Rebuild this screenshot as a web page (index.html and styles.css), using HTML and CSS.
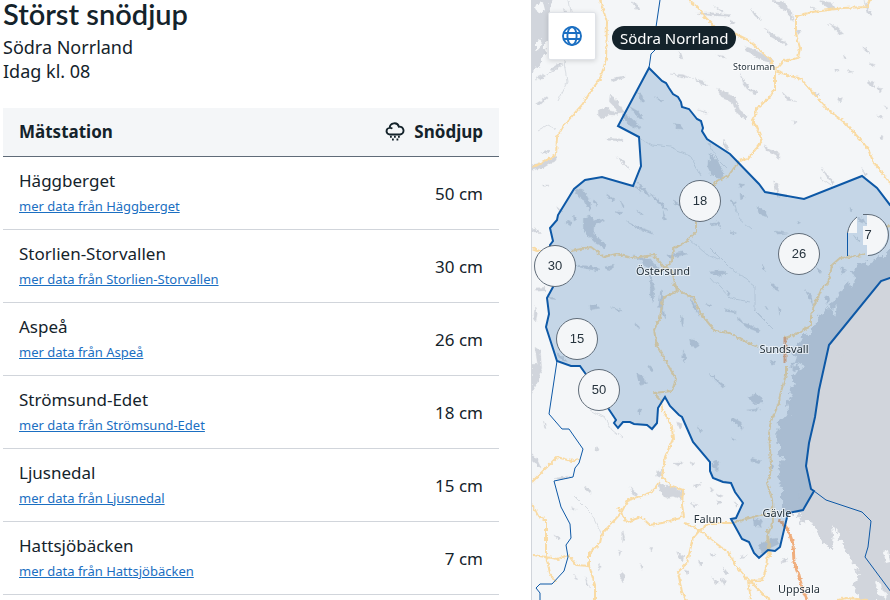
FILE: index.html
```html
<!DOCTYPE html>
<html lang="sv">
<head>
<meta charset="utf-8">
<meta name="viewport" content="width=device-width, initial-scale=1">
<title>Störst snödjup</title>
<link rel="stylesheet" href="styles.css">
</head>
<body>
<main class="layout">
  <section class="report">
    <h1 class="title">Störst snödjup</h1>
    <p class="meta">Södra Norrland</p>
    <p class="meta">Idag kl. 08</p>
    <table class="stations">
      <thead>
        <tr>
          <th scope="col">Mätstation</th>
          <th scope="col" class="value">
            <span class="depth-head">
              <svg class="snow-icon" viewBox="0 0 20 20" aria-hidden="true">
                <path d="M5 12.500a3.300 3.300 0 0 1-.3-6.600 4.700 4.700 0 0 1 9.200-1.200 3.900 3.900 0 0 1 1.300 7.800zM4.700 5.900q1.500-.3 2.600.8" fill="none" stroke="currentColor" stroke-width="1.900"/>
                <path d="M5 14.800h1.800M9 14.800h1.800M13 14.800h1.800M7 17.500h1.800M11.500 17.500h1.800M9 19.500h0" fill="none" stroke="currentColor" stroke-width="1.900"/>
              </svg>
              Snödjup
            </span>
          </th>
        </tr>
      </thead>
      <tbody>
        <tr><td>Häggberget<a href="#haggberget">mer data från Häggberget</a></td><td class="value">50 cm</td></tr>
        <tr><td>Storlien-Storvallen<a href="#storlien">mer data från Storlien-Storvallen</a></td><td class="value">30 cm</td></tr>
        <tr><td>Aspeå<a href="#aspea">mer data från Aspeå</a></td><td class="value">26 cm</td></tr>
        <tr><td>Strömsund-Edet<a href="#stromsund">mer data från Strömsund-Edet</a></td><td class="value">18 cm</td></tr>
        <tr><td>Ljusnedal<a href="#ljusnedal">mer data från Ljusnedal</a></td><td class="value">15 cm</td></tr>
        <tr><td>Hattsjöbäcken<a href="#hattsjobacken">mer data från Hattsjöbäcken</a></td><td class="value">7 cm</td></tr>
      </tbody>
    </table>
  </section>

  <section class="map" aria-label="Karta över Södra Norrland">
    <svg class="map-canvas" viewBox="532 0 358 600" preserveAspectRatio="xMinYMin slice" role="img" aria-label="Snödjup per station">
      <defs>
        <filter id="coast" x="-5%" y="-5%" width="110%" height="110%" color-interpolation-filters="sRGB">
          <feTurbulence type="fractalNoise" baseFrequency="0.16" numOctaves="3" seed="7"/>
          <feDisplacementMap in="SourceGraphic" scale="14" xChannelSelector="R" yChannelSelector="G"/>
        </filter>
        <filter id="rough" x="-5%" y="-5%" width="110%" height="110%" color-interpolation-filters="sRGB">
          <feTurbulence type="fractalNoise" baseFrequency="0.3" numOctaves="2" seed="4"/>
          <feDisplacementMap in="SourceGraphic" scale="4" xChannelSelector="R" yChannelSelector="G"/>
        </filter>
        <filter id="wobble" x="-5%" y="-5%" width="110%" height="110%" color-interpolation-filters="sRGB">
          <feTurbulence type="fractalNoise" baseFrequency="0.12" numOctaves="2" seed="9"/>
          <feDisplacementMap in="SourceGraphic" scale="5" xChannelSelector="R" yChannelSelector="G"/>
        </filter>
      </defs>

      <g class="water" filter="url(#coast)">
        <path d="M905 244L888 253 877 258 868 264 858 266 852 272 847 280 845 288 838 294 833 302 824 312 816 321 811 331 801 338 796 348 793 356 796 366 792 378 793 390 787 400 788 414 778 422 777 440 780 456 778 474 782 490 782 507 790 514 800 514 799 525 810 520 820 536 828 548 833 548 836 528 844 546 853 562 860 576 853 587 860 602 905 602z"/>
        <path d="M520-10h34l-4 22 3 10-4 18-5 10-4 14-6 8h-14z"/>
      </g>
      <g class="water lakes" filter="url(#rough)">
        <g transform="translate(530 0) scale(.3333)">
          <path d="M5 495l35-8 40-18-2 12-38 22-35 8zM240 285l14 8 18 28 10 14-14 4-18-22-12-12zM205 330l28-8 8 10 26 6-4 8-26-2-16 12-16-8zM322 275l14 10 8 22-10-2zM275 340l26 12 26 24 4 12-30-10-20-22zM430 370l20 4 10 14-16-2zM245 235l40-8v6l-36 12zM305 5l18 10 8 16-10-2zM445 155l8 4 6 18-8-2zM490 235l30 8 14 14-20-4zM560 265l10 8 25 4v24l-18-6zM535 480l14 18 20 22-4 14-20-10-12-24zM500 40l50-2 50 6v5l-60-2zM320 545l24 20 16 25-20-14zM140 565l20 4 12 30h-14zM375 290l24 14-6 2zM228 415l50 2v6l-44-2zM40 555h16v4h-16zM100 25l12 15-8 4zM20 230l18-8 10 8-16 10zM262 470l20 14 16 26-20-22zM420 222l40 2 20 10-24-4zM60 210l20-16 18-4-24 24zM300 320l24 14 16 24-20-10zM505 330l30 8-8 2zM20 310l30-20 4 2-24 24zM30 460l24-10 6 4-24 10z"/>
        </g>
        <g transform="translate(710 0) scale(.3333)">
          <path d="M185 0l34 5 26 30 5 30-18-28-28-20zM325 0l40 8 15 22-22-4-22-16zM105 140l30 10 18 10 35 18-4 12-35-12-22-16-22-12zM165 85l28 20 30 18-4 8-35-20zM90 220l12 20 18 28 26 8-6 6-24-8-16-24zM25 265l18 16 30 8 16 40 24 20-6 10-30-24-8-24-36-24zM60 60l16 8-8 6zM12 20l28 14-6 4zM355 70l26 12 20 20-10 2-16-16zM215 275l24 22 22 8-28-4zM475 245l20-2-4 20-14-8zM500 262l16 4-6 14zM455 140l18 8 8 14-16-10zM478 188l18 6-10 6zM385 292l12 2-4 12-10-6zM374 205l14 6-12 4zM160 434l20 15 28 10-2 20-8-14-30-16zM335 505l20 22 18 20-6 4-16-20zM455 505l14 16-2 10zM40 418l14 22-2 14-10-16zM0 460l22 20 20 40-8 20-34-20zM248 362l14 4-8 4zM465 0l8 22 14 24-12-2-4-16zM190 540l14 14 4 40-10-20zM412 210l18 6-14 2zM400 165l10 10-6 4zM520 318l14 6-4 4zM120 25l20 18 14 20-20-16zM260 90l14 4-10 10zM515 405l4 4-2 12-6-4zM20 165l24 4 6 6-24-4zM300 20l20 4-4 6zM500 345l20 6-4 6zM215 120l18 12-6 6zM312 278l18 4-8 8z"/>
        </g>
        <g transform="translate(530 180) scale(.3333)">
          <path d="M140 25l26 14 16 30-2 24-18-32-26-20zM160 115l20-8 16 14 20-6 8 8-32 12-2 26 38 32-4 12-28-16-22-22-14-20zM290 125l36 16 40 14 2 8-38-14zM308 228l50 8 26 28-10 6-26-10-16-20zM230 42l26 18-8 4zM255 95l24 2-10 6zM400 95l10 24-10 4zM130 105l10 14-8 4zM110 120l16 4-4 14-14-8zM360 40l40 30 10 20-30-24zM430 60l40 20-4 6-34-16zM180 375h20l10 10-28 4zM245 380l30 12-6 4zM362 300l10 30-2 40-10-20zM392 330l10 20-4 40-12-10zM480 345l18 40 12 24-20-26zM478 475l22 10 8 12-12 8-14-10zM315 428l14 14-4 6zM460 510l8 20-4 20-6-20zM140 255l40 4 30 8-6 6-60-12zM225 260l28-4-10 14-16-4zM355 555l16 14-8 6zM455 405l6 10-2 26-6-20zM410 225l50-10 10 8-50 12zM540 275l40-2 10 8-40 2zM5 145l20 6 6 10-20-6zM80 515l20 16 12 14-24-8zM14 380l8 20-4 24-6-10zM15 502l16 10 4 50-14 38-10-6 12-40zM50 345l28 14-16-2zM15 324l30-2v10l-26 2zM270 60l14 20-4 4zM320 90l20 14-4 4zM355 270l8 20 12 40-10-10zM400 390l8 24-4 4-8-20zM80 80l16 14-8 4zM310 10l24 24-6 2zM190 60l10 4v16zM530 370l16 6-8 4zM560 120l10 10 4 20z"/>
        </g>
        <g transform="translate(710 180) scale(.3333)">
          <path d="M140 80l26 14 8 16-26-6zM195 153l38 6-30 4zM185 310l18 14 4 10-18-8zM282 325l22 20 4 30-14-28zM420 82l10 10-8 4zM158 252l8 20-10-6zM320 262l16 14-8 4zM14 272l34 4-20 14zM85 410l14 18 24 8 28 16-6 4-36-14-22-18zM205 380l8 10-4 16zM50 330l10 10-4 10zM0 130l30-2v6l-28 4zM60 60l20 8-10 6zM90 42l16 10-14 8zM85 10l20 4-14 8zM440 110l20 6 8 16-20-8zM165 375l10 14-6-2zM430 165l20 20-8-2zM380 520l20 4-10 6zM260 124l12 4-8 4zM40 385l30 8 10 6-30-4zM60 155l20 4-8 4zM390 260l20 10-12 14zM345 345l16 10-10 16zM240 560l30-2 6 8-24 6z"/>
        </g>
        <g transform="translate(530 360) scale(.3333)">
          <path d="M5 10h14l14 30-10 26-18 35zM320 40l20 10 10 20-16 6-10-18zM380 335l14-6 2 24-16-4zM385 365l20 14 20-2 18 12 20 6-8 24-26-10-24 6-14-20zM300 380l16 16 6 14-14-6zM440 185l16 6-2 16-10-6zM430 310l30-2-14 10zM480 305l14 6-10 6zM505 200l12 14-8 2zM490 378l26-8-20 14zM200 260l8 4-4 12-6-4zM165 378l18 14v8l-14-8zM440 575l22 14-4 14-12-12zM505 600l14 10-8 10zM465 630l14 4-8 10zM545 310l20 4v18l-18-8zM275 635l10 10-6 24-8-14zM165 650l14 30-8-4zM278 510l6 22-6 16zM125 440l14 8-10 8zM5 280l14 14 14 30-26-20zM545 650l20 20-6 4zM580 620l14 20-8 4zM130 645l14 10-6 4zM75 355l50-8-30 12zM360 560l8 4-4 10zM205 612l10 6-6 12zM325 145l10 4-4 16-8-10zM40 180l8 24-4 4zM560 400l20 8-12 4zM480 430l24 4-10 6zM75 525l16 10-6 6zM265 570l8 4-4 14zM540 580l16 6-12 4zM330 610l10 10-4 8zM570 360l20 6-10 4z"/>
        </g>
        <g transform="translate(710 360) scale(.3333)">
          <path d="M115 115l20-14 16 8 8 20-26 2zM65 172l28 14 4 22-12-14-20-12zM0 40l24 20 22 18-8 6-30-30zM15 300l14 10-20 8zM125 295l30 8-8 8-20-6zM145 555l30-16 25-4 8 16-30 14-18 20zM130 475l28 8-6 16-20-2zM270 380l4 20-8 20zM65 235l12 4-8 4zM30 654l16 8-2 14zM218 600l16-6-6 12-12 2zM95 590l20-6-22 14zM180 300l12 20-6 6zM110 150l40-4-20 8zM0 385l14 6-8 6zM20 420l16 8-10 4zM180 0l16 8-8 8zM75 425l10 14-6 4z"/>
        </g>
      </g>

      <g class="islands" filter="url(#rough)">
        <path d="M875 580l6 4 3 12-6-2zM883 552l5-2 2 12-4 1zM832 525l4 7 1 12-4-8zM534 6l9-4 2 8-7 4zM536 42l6-4-1 9-5 4zM548 22l6 4-2 10zM849 268l6 10-3 10-5-9zM832 310l5-5-2 12zM797 362l8 4-5 5zM881 590l6 3-1 6-5-4z"/>
      </g>

      <g class="rivers" filter="url(#wobble)">
        <path d="M569 0l4 24-10 31 4 27-9 19M640 137l12 8 18 2 20 8 11 21M707 142l8 14 12 12M536 80l18-10 12-8M574 496l18 18 10 21M590 410l14 8 8 12 10 8M710 248l18 18 27 20 0 25 20 20M710 276l20 22 20 4M690 240l14 12 16 8M735 205l4 14 12 10M820 178l14 10M538 131l10-6 8 4"/>
      </g>

      <g class="roads" filter="url(#rough)">
        <path d="M600 0l7 22-1 38-6 19-7 9-11 17-18 20-7 12-1 18-24 13"/>
        <path d="M688 0l8 6 10 12 11 11 12 6 5 3M734 33l14 7 15 13 8 7 4 10 8-9 15-3 2-10-4-14 0-18 17-4 16-2 14-2 24-1 5-12 9-10M775 71l12 4 14 4 14 16 12 14 17 13 14 15 10 12 5 12 17 22M775 71l0 18-6 9-13 11-1 7-3 5 5 6 5 14-13 17-10 3-10 14-12 6-10 11M696 221v11l-12 11-11 6-1 12-8 7-5 4"/>
        <path d="M532 248l10 4M571 251l20-4 13 10 12-3 16 4 22-3 10 12 8 4 5 20-14 7-3 20-6 12 3 16 19 33-4 12-18 2 6 6 3 12"/>
        <path d="M672 283l12 11 9 3 8 17 14 17 15 2 12 7 16 7"/>
        <path d="M890 226l-6 1M866 254l-15 3-11 1-8 7-4 18-6 5-8 18-3 10 0 10-15 8-11 4M786 366v9l-6 20-1 8-8 18-2 12 2 31-1 11-3 8 5 16 1 23-5 12 2 23"/>
        <path d="M664 412l8 15 1 12-8 18-3 20 10 9 11 4-1 15 2 12-22 6-12 2-9-8-14 5-9-14M660 481l-8 11-14 5-10 3-7 13-10 11-9 10-2 9-11 10v13l-13-1-8-10-10 4-25-4M588 562l7 23v15"/>
        <path d="M685 523l15 7 14 12 14 10 8 14 12 14 12 1M748 581l3 19M700 530l-7 8-6 25-9 9 4 20 4 8M700 530l10-7 22 0 28-8 6 0M752 583l12 12 6 5M749 582l14-2 3-13 2-14-1-24M532 482l12-12 13-13 14 4 8-2M532 504l6 12 8 4 0 36 4 17 5 9M838 600l8-2 22 2"/>
      </g>
      <path class="motorway" filter="url(#rough)" d="M785 338v24M779 519l10 13 4 12 1 18 5 13 3 13 5 12"/>

      <path class="region" d="M649 68L662 81 666 83 669 88 673 94 678 97 681 102 682 107 689 109 697 119 701 121 703 128 702 131 707 139 730 154 759 184 765 192 804 199 862 176 877 188 890 205 930 240V265L890 278 881 281 829 345 819 390 815 417 809 443 806 466 811 489 814 491 803 510 788 513 780 547 775 551 768 550 759 558 754 553 749 542 742 539 731 519 736 518 743 503 735 492 731 483 723 482 713 478 710 471 710 462 693 442 682 417 679 415 670 406 665 397 658 408 657 423 652 429 647 425 634 424 630 422 623 422 618 428 614 423 616 420 608 408 585 373 580 366 571 366 557 361 546 327 549 314 547 298 553 287 550 245 553 241 550 228 557 220 558 215 574 189 585 180 602 177 633 186 641 166 639 137 618 126z"/>
      <path class="border" d="M660 0l-4 27-1 23-4 4-2 14M557 361l-8 53 13 15h7l14 20-4 14-4 5-2 9-19 4 7 26 9 17 1 14-5 7 2 12-4 14-12 13h-12l-4 4 4 5v8M814 491l12 9 36 12 9 9-3 26-3 10 26 35"/>

      <g class="places">
        <text class="small" x="754" y="70">Storuman</text>
        <text x="663" y="275">Östersund</text>
        <text x="784" y="353">Sundsvall</text>
        <text x="777" y="517">Gävle</text>
        <text x="708" y="523">Falun</text>
        <text x="799" y="593">Uppsala</text>
      </g>

      <g class="markers">
        <circle cx="700" cy="201" r="20.500"/><text x="700" y="205">18</text>
        <circle cx="555" cy="266" r="20.500"/><text x="555" y="270">30</text>
        <circle cx="799" cy="254" r="20.500"/><text x="799" y="258">26</text>
        <circle cx="577" cy="339" r="20.500"/><text x="577" y="343">15</text>
        <circle cx="599" cy="390" r="20.500"/><text x="599" y="394">50</text>
        <path class="fill" d="M867 214a20.500 20.500 0 0 1 0 41V245H863V226H867zM857 217V233H848Q849 223 857 217z"/>
        <path class="ring" d="M863 214.500h5a20.500 20.500 0 0 1 0 41M857 217q-8 6-9.500 16v10"/>
        <path class="edge" d="M847.500 233v23"/>
        <text x="868" y="239">7</text>
      </g>
    </svg>
    <div class="map-bar">
      <button class="globe" type="button" aria-label="Visa hela kartan">
        <svg viewBox="0 0 20 20" aria-hidden="true"><g fill="none" stroke="currentColor" stroke-width="1.900"><circle cx="10" cy="10" r="9"/><ellipse cx="10" cy="10" rx="4.600" ry="9"/><path d="M1.500 7h17M1.500 13h17"/></g></svg>
      </button>
      <span class="region-name">Södra Norrland</span>
    </div>
  </section>
</main>
</body>
</html>
```
FILE: styles.css
```css
* { box-sizing: border-box; }
body {
  margin: 0;
  background: #fff;
  color: #14232b;
  font: 17px/24px "Noto Sans", sans-serif;
}
.layout {
  display: grid;
  grid-template-columns: minmax(0, 499fr) minmax(0, 359fr);
  column-gap: 32px;
  height: 100vh;
  overflow: hidden;
}
.report { padding-left: 3px; }
.title {
  margin: 0 0 7px;
  font: 600 29px/28px Lato, sans-serif;
}
.meta { margin: 0; font-size: 18px; }
.stations {
  width: 100%;
  margin-top: 25px;
  border-collapse: collapse;
}
th, td { padding: 12px 16px; text-align: left; }
th {
  background: #f4f6f8;
  border-bottom: 1px solid #5f6b78;
  font-weight: 700;
}
td { padding-bottom: 11px; border-bottom: 1px solid #d1d5db; }
.value { text-align: right; }
.depth-head {
  display: inline-flex;
  align-items: center;
  gap: 9px;
  vertical-align: top;
}
.snow-icon { width: 20px; height: 20px; }
td a {
  display: block;
  width: fit-content;
  margin-top: 1px;
  color: #1b6fc2;
  font-size: 13px;
}
.map {
  position: relative;
  overflow: hidden;
  border-left: 1px solid #d1d5db;
  background: #f4f6f8;
}
.map-canvas { display: block; width: 100%; height: 100%; }
.map-bar {
  position: absolute;
  top: 12px;
  left: 16px;
  display: flex;
  align-items: flex-start;
  gap: 16px;
}
.globe {
  display: grid;
  place-items: center;
  width: 48px;
  height: 48px;
  padding: 0;
  border: 1px solid #e0e3e8;
  border-radius: 2px;
  background: #fff;
  color: #1b6fc2;
  box-shadow: 0 1px 5px rgb(0 0 0 / 15%);
}
.globe svg { width: 20px; height: 20px; }
.region-name {
  margin-top: 14px;
  padding: 0 8px;
  border-radius: 12px;
  background: #14232b;
  color: #fff;
  font-size: 15px;
}
.water { fill: #d1d5dc; }
.lakes { stroke: #d1d5dc; stroke-width: 1; }
.islands { fill: #f4f6f8; }
.rivers { fill: none; stroke: #d9dde2; stroke-width: 1; }
.roads { fill: none; stroke: #f9dba4; stroke-width: 2; stroke-linejoin: round; }
.motorway { fill: none; stroke: #efad7c; stroke-width: 3; stroke-linejoin: round; }
.region { fill: rgb(8 88 164 / 20%); stroke: #0d58a6; stroke-width: 2; }
.border { fill: none; stroke: #0d58a6; stroke-width: 1; }
.places text {
  fill: #26333d;
  stroke: rgb(255 255 255 / 60%);
  stroke-width: 2;
  paint-order: stroke;
  font: 11px "Noto Sans", sans-serif;
  text-anchor: middle;
}
.places .small { font-size: 9px; }
.markers circle { fill: #f4f6f8; stroke: #5f6b78; stroke-width: 1; }
.markers .fill { fill: #f4f6f8; }
.markers .ring { fill: none; stroke: #5f6b78; }
.markers .edge { fill: none; stroke: #0d58a6; }
.markers text {
  fill: #26333d;
  font: 13px "Liberation Sans", Arial, sans-serif;
  text-anchor: middle;
}
```
